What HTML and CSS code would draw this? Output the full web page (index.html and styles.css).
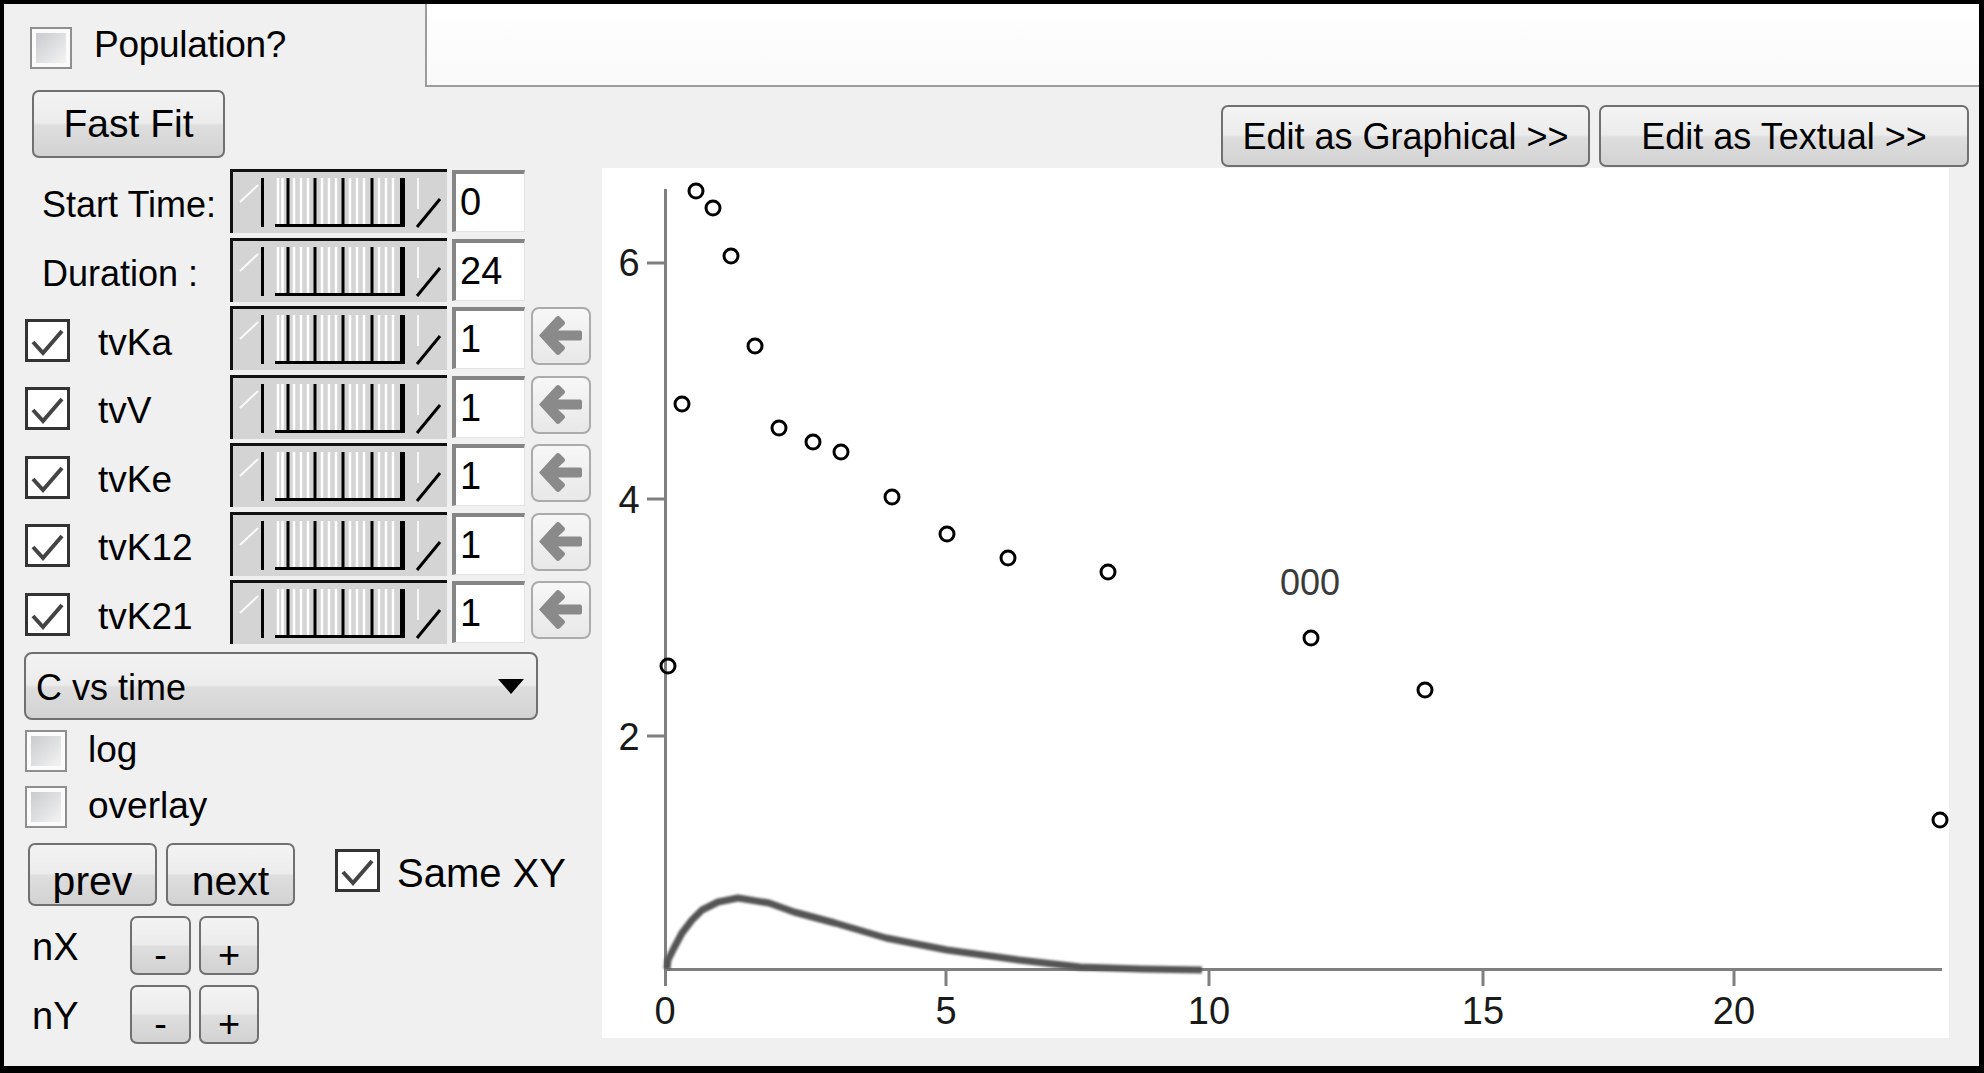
FILE: index.html
```html
<!DOCTYPE html>
<html>
<head>
<meta charset="utf-8">
<title>Fit</title>
<link rel="stylesheet" href="styles.css">
</head>
<body>
<svg class="defs" width="0" height="0" aria-hidden="true">
  <defs>
    <symbol id="trk" viewBox="3 3 214 61">
      <line x1="10" y1="33" x2="28" y2="16" stroke="#fafafa" stroke-width="2"/>
      <line x1="32.5" y1="9" x2="32.5" y2="58" stroke="#000" stroke-width="3"/>
      <g stroke="#ffffff" stroke-width="2.5">
        <line x1="48" y1="9" x2="48" y2="55"/><line x1="52.5" y1="9" x2="52.5" y2="55"/>
        <line x1="64" y1="9" x2="64" y2="55"/><line x1="71" y1="9" x2="71" y2="55"/><line x1="78" y1="9" x2="78" y2="55"/>
        <line x1="92" y1="9" x2="92" y2="55"/><line x1="99" y1="9" x2="99" y2="55"/><line x1="106" y1="9" x2="106" y2="55"/>
        <line x1="120" y1="9" x2="120" y2="55"/><line x1="127" y1="9" x2="127" y2="55"/><line x1="134" y1="9" x2="134" y2="55"/>
        <line x1="149" y1="9" x2="149" y2="55"/><line x1="156" y1="9" x2="156" y2="55"/><line x1="163" y1="9" x2="163" y2="55"/>
      </g>
      <line x1="45" y1="56.5" x2="175" y2="56.5" stroke="#000" stroke-width="3"/>
      <g stroke="#000" stroke-width="3">
        <line x1="58" y1="9" x2="58" y2="56"/><line x1="85" y1="9" x2="85" y2="56"/>
        <line x1="113" y1="9" x2="113" y2="56"/><line x1="142" y1="9" x2="142" y2="56"/>
      </g>
      <line x1="172.5" y1="9" x2="172.5" y2="58" stroke="#000" stroke-width="5"/>
      <line x1="188" y1="9" x2="188" y2="40" stroke="#f6f6f6" stroke-width="2"/>
      <line x1="187" y1="58" x2="210" y2="30" stroke="#000" stroke-width="3"/>
    </symbol>
    <symbol id="arr" viewBox="0 0 56 54">
      <path d="M6 26.5 L23 8 Q25 6 27 8 L31 12 Q33 14 31 16 L25 21.5 H47 Q49 21.5 49 23.5 V29.5 Q49 31.5 47 31.5 H25 L31 37 Q33 39 31 41 L27 45 Q25 47 23 45 Z" fill="#8a8a8a"/>
    </symbol>
    <symbol id="chk" viewBox="0 0 39 37">
      <polyline points="5,20 15,31 34,9" fill="none" stroke="#444" stroke-width="4"/>
    </symbol>
    <filter id="soft" x="-5%" y="-20%" width="110%" height="140%">
      <feGaussianBlur stdDeviation="0.9"/>
    </filter>
  </defs>
</svg>

<div class="win">
  <div class="top">
    <div class="pop"><span class="cb"></span><span class="poplbl">Population?</span></div>
    <div class="hdr"></div>
  </div>

  <div class="main">
    <div class="left">
      <div class="btn fast">Fast Fit</div>

      <div class="params">
        <div class="prow">
          <div class="plabel">Start Time:</div>
          <div class="track"><svg><use href="#trk"/></svg></div>
          <div class="num">0</div>
        </div>
        <div class="prow">
          <div class="plabel">Duration :</div>
          <div class="track"><svg><use href="#trk"/></svg></div>
          <div class="num">24</div>
        </div>
        <div class="prow">
          <div class="pchk"><span class="cb on"><svg><use href="#chk"/></svg></span><span class="pname">tvKa</span></div>
          <div class="track"><svg><use href="#trk"/></svg></div>
          <div class="num">1</div>
          <div class="arrow"><svg><use href="#arr"/></svg></div>
        </div>
        <div class="prow">
          <div class="pchk"><span class="cb on"><svg><use href="#chk"/></svg></span><span class="pname">tvV</span></div>
          <div class="track"><svg><use href="#trk"/></svg></div>
          <div class="num">1</div>
          <div class="arrow"><svg><use href="#arr"/></svg></div>
        </div>
        <div class="prow">
          <div class="pchk"><span class="cb on"><svg><use href="#chk"/></svg></span><span class="pname">tvKe</span></div>
          <div class="track"><svg><use href="#trk"/></svg></div>
          <div class="num">1</div>
          <div class="arrow"><svg><use href="#arr"/></svg></div>
        </div>
        <div class="prow">
          <div class="pchk"><span class="cb on"><svg><use href="#chk"/></svg></span><span class="pname">tvK12</span></div>
          <div class="track"><svg><use href="#trk"/></svg></div>
          <div class="num">1</div>
          <div class="arrow"><svg><use href="#arr"/></svg></div>
        </div>
        <div class="prow">
          <div class="pchk"><span class="cb on"><svg><use href="#chk"/></svg></span><span class="pname">tvK21</span></div>
          <div class="track"><svg><use href="#trk"/></svg></div>
          <div class="num">1</div>
          <div class="arrow"><svg><use href="#arr"/></svg></div>
        </div>
      </div>

      <div class="combo"><span class="combotxt">C vs time</span><span class="caret"></span></div>

      <div class="opts">
        <div class="opt"><span class="cb"></span><span class="optlbl">log</span></div>
        <div class="opt"><span class="cb"></span><span class="optlbl">overlay</span></div>
      </div>

      <div class="navrow">
        <div class="btn nav">prev</div>
        <div class="btn nav">next</div>
        <div class="same"><span class="cb on"><svg><use href="#chk"/></svg></span><span class="samelbl">Same XY</span></div>
      </div>

      <div class="nrow">
        <span class="nlbl">nX</span>
        <div class="btn pm">-</div>
        <div class="btn pm">+</div>
      </div>
      <div class="nrow">
        <span class="nlbl">nY</span>
        <div class="btn pm">-</div>
        <div class="btn pm">+</div>
      </div>
    </div>

    <div class="right">
      <div class="edits">
        <div class="btn edit">Edit as Graphical &gt;&gt;</div>
        <div class="btn edit">Edit as Textual &gt;&gt;</div>
      </div>
      <div class="plot">
        <svg class="chart" width="1347" height="870" viewBox="0 0 1347 870">
          <g stroke="#7f7f7f" stroke-width="3" fill="none">
            <line x1="63.5" y1="21" x2="63.5" y2="802"/>
            <line x1="62" y1="801.5" x2="1340" y2="801.5"/>
            <line x1="45" y1="95" x2="63" y2="95"/>
            <line x1="45" y1="331" x2="63" y2="331"/>
            <line x1="45" y1="568" x2="63" y2="568"/>
            <line x1="63.5" y1="801" x2="63.5" y2="818"/>
            <line x1="344" y1="801" x2="344" y2="818"/>
            <line x1="607" y1="801" x2="607" y2="818"/>
            <line x1="881" y1="801" x2="881" y2="818"/>
            <line x1="1132" y1="801" x2="1132" y2="818"/>
          </g>
          <g class="ax" text-anchor="middle">
            <text x="27" y="108">6</text>
            <text x="27" y="345">4</text>
            <text x="27" y="582">2</text>
            <text x="63" y="856">0</text>
            <text x="344" y="856">5</text>
            <text x="607" y="856">10</text>
            <text x="881" y="856">15</text>
            <text x="1132" y="856">20</text>
          </g>
          <polyline points="65,801 66,792 72,780 80,765 90,752 100,742 116,734 136,730 167,735 192,744 233,755 284,770 345,782 417,792 478,799 539,801 600,802" fill="none" stroke="#555" stroke-width="7" stroke-linejoin="round" filter="url(#soft)"/>
          <g fill="none" stroke="#000" stroke-width="3">
            <circle cx="66" cy="498" r="7"/>
            <circle cx="80" cy="236" r="7"/>
            <circle cx="94" cy="23" r="7"/>
            <circle cx="111" cy="40" r="7"/>
            <circle cx="129" cy="88" r="7"/>
            <circle cx="153" cy="178" r="7"/>
            <circle cx="177" cy="260" r="7"/>
            <circle cx="211" cy="274" r="7"/>
            <circle cx="239" cy="284" r="7"/>
            <circle cx="290" cy="329" r="7"/>
            <circle cx="345" cy="366" r="7"/>
            <circle cx="406" cy="390" r="7"/>
            <circle cx="506" cy="404" r="7"/>
            <circle cx="709" cy="470" r="7"/>
            <circle cx="823" cy="522" r="7"/>
            <circle cx="1338" cy="652" r="7"/>
          </g>
          <text class="tag" x="708" y="427" text-anchor="middle">000</text>
        </svg>
      </div>
    </div>
  </div>
</div>
</body>
</html>
```

FILE: styles.css
```css
* { box-sizing: border-box; margin: 0; padding: 0; }
html, body { width: 1984px; height: 1073px; overflow: hidden; }
body {
  font-family: "Liberation Sans", Arial, sans-serif;
  font-size: 37px;
  color: #000;
  background: #000;
}
.defs { position: absolute; width: 0; height: 0; overflow: hidden; }

.win {
  width: 1984px;
  height: 1073px;
  background: #f0f0f0;
  border-style: solid;
  border-color: #000;
  border-width: 4px 5px 7px 4px;
  display: flex;
  flex-direction: column;
}

/* top strip */
.top { display: flex; height: 83px; flex: none; }
.pop {
  width: 421px;
  display: flex;
  align-items: center;
  padding: 4px 0 0 26px;
}
.poplbl { margin-left: 22px; margin-top: -6px; letter-spacing: -0.3px; }
.hdr {
  flex: 1;
  background: linear-gradient(#ffffff, #f9f9f9);
  border-left: 2px solid #9c9c9c;
  border-bottom: 2px solid #9c9c9c;
}

.main { display: flex; flex: 1; }
.left { width: 596px; flex: none; display: flex; flex-direction: column; }
.right { flex: 1; display: flex; flex-direction: column; }

/* buttons */
.btn {
  display: flex;
  align-items: center;
  justify-content: center;
  border: 2px solid #707070;
  border-radius: 7px;
  background: linear-gradient(#f3f3f3 0%, #ececec 48%, #dedede 52%, #d2d2d2 100%);
  overflow: hidden;
  white-space: nowrap;
  line-height: 1;
}
.fast { margin: 3px 0 0 28px; width: 193px; height: 68px; font-size: 39px; padding-bottom: 2px; }

/* checkboxes */
.cb {
  display: inline-block;
  flex: none;
  width: 42px;
  height: 42px;
  border: 2px solid #8e8f8f;
  padding: 4px;
  background: linear-gradient(135deg, #c8cacd, #f4f4f4) content-box, #fbfbfb;
}
.cb.on {
  width: 45px;
  height: 43px;
  border: 3px solid #333;
  padding: 0;
  background: #fff;
}
.cb.on svg { display: block; width: 39px; height: 37px; }

/* parameter rows */
.params { margin-top: 11px; }
.prow { display: flex; height: 68.5px; align-items: flex-start; }
.plabel {
  width: 226px;
  height: 72px;
  display: flex;
  align-items: center;
  padding-left: 38px;
  font-size: 36px;
}
.pchk {
  width: 226px;
  height: 68.5px;
  display: flex;
  align-items: center;
  padding-left: 21px;
}
.pname { margin-left: 28px; margin-top: 5px; }
.track {
  width: 217px;
  height: 64px;
  flex: none;
  background: #d4d4d4;
  border-top: 3px solid #111;
  border-left: 3px solid #111;
}
.track svg { display: block; width: 214px; height: 61px; }
.num {
  width: 73px;
  height: 62px;
  flex: none;
  margin: 1px 0 0 5px;
  background: #fff;
  border-top: 4px solid #858585;
  border-left: 4px solid #858585;
  border-right: 1px solid #e3e3e3;
  border-bottom: 1px solid #e3e3e3;
  padding-left: 4px;
  display: flex;
  align-items: center;
  font-size: 38px;
}
.arrow {
  width: 60px;
  height: 58px;
  flex: none;
  margin: 1px 0 0 6px;
  border: 2px solid #ababab;
  border-radius: 8px;
  background: linear-gradient(#f7f7f7, #e8e8e8);
}
.arrow svg { display: block; width: 56px; height: 54px; }

/* combo */
.combo {
  margin: 3.5px 0 0 20px;
  width: 514px;
  height: 68px;
  border: 2px solid #707070;
  border-radius: 8px;
  background: linear-gradient(#f3f3f3 0%, #ececec 48%, #dedede 52%, #d2d2d2 100%);
  display: flex;
  align-items: center;
  justify-content: space-between;
  padding: 0 12px 0 10px;
  font-size: 36px;
}
.combotxt { margin-top: 3px; }
.caret {
  width: 0;
  height: 0;
  border-left: 13px solid transparent;
  border-right: 13px solid transparent;
  border-top: 15px solid #000;
}

/* options */
.opts { margin-top: 3px; }
.opt { height: 56px; display: flex; align-items: center; padding-left: 21px; }
.optlbl { margin-left: 21px; margin-top: -2px; }

.navrow { margin-top: 8px; height: 63px; display: flex; align-items: center; padding-left: 24px; }
.nav {
  width: 129px;
  height: 63px;
  font-size: 41px;
  align-items: flex-start;
  padding-top: 16px;
}
.nav + .nav { margin-left: 9px; }
.same { margin-left: 40px; display: flex; align-items: center; margin-top: -8px; }
.samelbl { margin-left: 17px; font-size: 40px; margin-top: 6px; }

.nrow { margin-top: 10px; height: 59px; display: flex; align-items: center; padding-left: 28px; }
.nlbl { width: 98px; font-size: 38px; margin-top: 4px; }
.pm {
  width: 61px;
  height: 59px;
  font-size: 38px;
  align-items: flex-start;
  padding-top: 18px;
}
.pm + .pm { margin-left: 8px; width: 60px; }

/* right side */
.edits {
  margin-top: 18px;
  height: 62px;
  display: flex;
  justify-content: flex-end;
  gap: 9px;
  padding-right: 10px;
}
.edit { width: 369px; height: 62px; font-size: 36px; padding-top: 2px; }
.edit + .edit { width: 370px; }

.plot {
  margin: 1px 0 0 2px;
  width: 1347px;
  height: 870px;
  background: #fff;
}
.chart { display: block; }
.ax { font-family: "Liberation Sans", Arial, sans-serif; font-size: 38px; fill: #1a1a1a; }
.tag { font-family: "Liberation Sans", Arial, sans-serif; font-size: 36px; fill: #3a3a3a; }
```
